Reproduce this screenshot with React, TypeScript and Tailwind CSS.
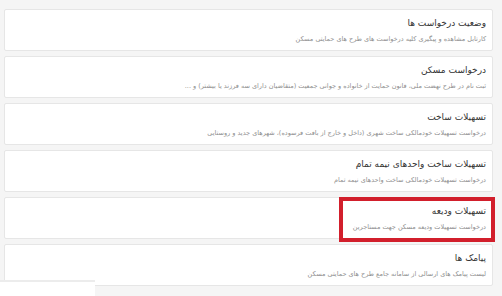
const items = [
  {
    title: "وضعیت درخواست ها",
    desc: "کارتابل مشاهده و پیگیری کلیه درخواست های طرح های حمایتی مسکن",
  },
  {
    title: "درخواست مسکن",
    desc: "ثبت نام در طرح نهضت ملی، قانون حمایت از خانواده و جوانی جمعیت (متقاضیان دارای سه فرزند یا بیشتر) و ...",
  },
  {
    title: "تسهیلات ساخت",
    desc: "درخواست تسهیلات خودمالکی ساخت شهری (داخل و خارج از بافت فرسوده)، شهرهای جدید و روستایی",
  },
  {
    title: "تسهیلات ساخت واحدهای نیمه تمام",
    desc: "درخواست تسهیلات خودمالکی ساخت واحدهای نیمه تمام",
  },
  {
    title: "تسهیلات ودیعه",
    desc: "درخواست تسهیلات ودیعه مسکن جهت مستاجرین",
    marked: true,
  },
  {
    title: "پیامک ها",
    desc: "لیست پیامک های ارسالی از سامانه جامع طرح های حمایتی مسکن",
  },
];

export default function App() {
  return (
    <div
      dir="rtl"
      className="relative w-[502px] h-[296px] overflow-hidden bg-[#f5f5f5] pt-[9px] pr-[9px] pl-[4px]"
      style={{ fontFamily: '"DejaVu Sans", sans-serif' }}
    >
      <div className="flex flex-col gap-[5px]">
        {items.map((item) => (
          <div
            key={item.title}
            className="relative h-[42px] bg-white border border-[#e6e6e6] rounded-[2px] px-[6px] pt-[6px]"
          >
            <div className="text-[9px] leading-[14px] text-[#333333]">{item.title}</div>
            <div className="mt-[4px] text-[6.5px] leading-[10px] text-[#8f8f8f] whitespace-nowrap">
              {item.desc}
            </div>
            {item.marked && (
              <div className="absolute -top-px -right-[3px] w-[156px] h-[45px] border-4 border-[#d21f2c]" />
            )}
          </div>
        ))}
      </div>

      {/* bottom-left overlay strip */}
      <div className="absolute left-0 top-[280px] w-[95px] h-[16px] bg-white border-t-2 border-[#ececec]" />
    </div>
  );
}
